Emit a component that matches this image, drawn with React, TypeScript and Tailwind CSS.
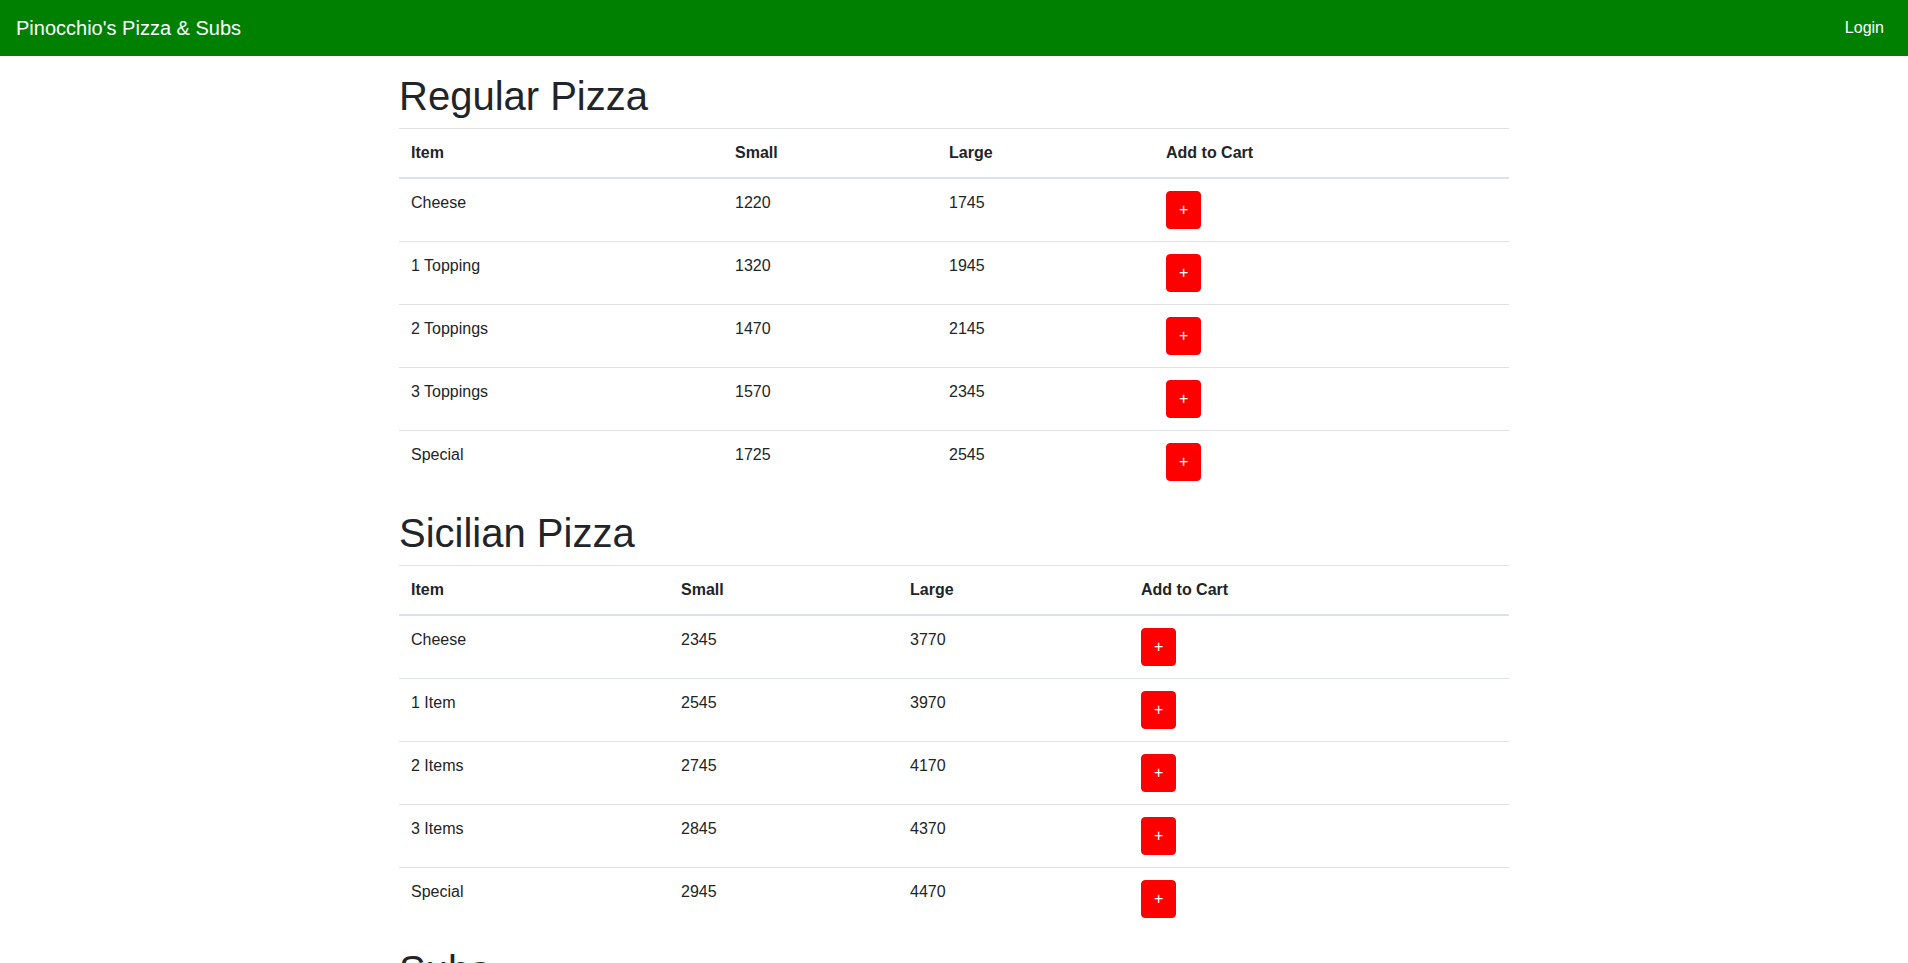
import React from 'react';

type Row = { name: string; small: number; large: number };

interface MenuTableProps {
  title: string;
  rows: Row[];
  widths: [string, string, string, string];
}

const regular: Row[] = [
  { name: 'Cheese', small: 1220, large: 1745 },
  { name: '1 Topping', small: 1320, large: 1945 },
  { name: '2 Toppings', small: 1470, large: 2145 },
  { name: '3 Toppings', small: 1570, large: 2345 },
  { name: 'Special', small: 1725, large: 2545 },
];

const sicilian: Row[] = [
  { name: 'Cheese', small: 2345, large: 3770 },
  { name: '1 Item', small: 2545, large: 3970 },
  { name: '2 Items', small: 2745, large: 4170 },
  { name: '3 Items', small: 2845, large: 4370 },
  { name: 'Special', small: 2945, large: 4470 },
];

const MenuTable: React.FC<MenuTableProps> = ({ title, rows, widths }) => {
  return (
    <section>
      <h1 className="text-[40px] leading-[48px] font-medium mb-2">{title}</h1>
      <table className="w-full table-fixed border-collapse mb-4">
        <thead>
          <tr>
            <th className={`${widths[0]} text-left font-bold p-3 border-t border-b-2 border-[#dee2e6]`}>Item</th>
            <th className={`${widths[1]} text-left font-bold p-3 border-t border-b-2 border-[#dee2e6]`}>Small</th>
            <th className={`${widths[2]} text-left font-bold p-3 border-t border-b-2 border-[#dee2e6]`}>Large</th>
            <th className={`${widths[3]} text-left font-bold p-3 border-t border-b-2 border-[#dee2e6]`}>Add to Cart</th>
          </tr>
        </thead>
        <tbody>
          {rows.map((r) => (
            <tr key={r.name}>
              <td className="p-3 align-top border-t border-[#dee2e6]">{r.name}</td>
              <td className="p-3 align-top border-t border-[#dee2e6]">{r.small}</td>
              <td className="p-3 align-top border-t border-[#dee2e6]">{r.large}</td>
              <td className="p-3 align-top border-t border-[#dee2e6]">
                <button className="bg-[#ff0000] text-white border border-[#ff0000] rounded px-3 py-1.5 leading-6 text-base">
                  +
                </button>
              </td>
            </tr>
          ))}
        </tbody>
      </table>
    </section>
  );
};

export default function App() {
  return (
    <div className="min-h-screen bg-white text-[#212529] text-base leading-6" style={{ fontFamily: '"Liberation Sans", Arial, sans-serif' }}>
      <nav className="bg-[#008000] h-14 px-4 flex items-center justify-between">
        <a className="text-white text-xl leading-[30px] py-[5px]">Pinocchio's Pizza &amp; Subs</a>
        <a className="text-white px-2 py-2">Login</a>
      </nav>
      <main className="w-[1110px] mx-auto pt-4">
        <MenuTable title="Regular Pizza" rows={regular} widths={['w-[324px]', 'w-[214px]', 'w-[217px]', 'w-[355px]']} />
        <MenuTable title="Sicilian Pizza" rows={sicilian} widths={['w-[270px]', 'w-[229px]', 'w-[231px]', 'w-[380px]']} />
        <section>
          <h1 className="text-[40px] leading-[48px] font-medium mb-2">Subs</h1>
        </section>
      </main>
    </div>
  );
}
